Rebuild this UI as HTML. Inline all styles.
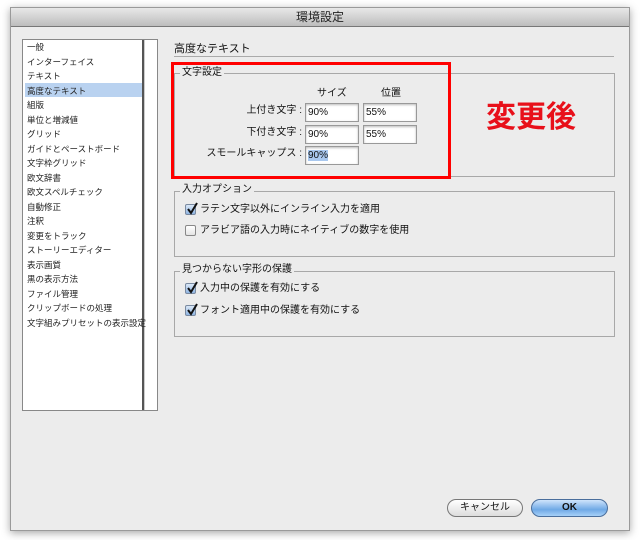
<!DOCTYPE html>
<html><head><meta charset="utf-8"><style>
*{margin:0;padding:0;box-sizing:border-box}
body{width:640px;height:540px;background:#fff;font-family:"Liberation Sans","Noto Sans CJK JP",sans-serif;position:relative;overflow:hidden;color:#111}
.a{position:absolute}
#win{left:10px;top:7px;width:620px;height:524px;background:#ececec;border:1px solid #9a9a9a;box-shadow:0 2px 8px rgba(0,0,0,.35)}
#title{left:0;top:0;width:618px;height:19px;background:linear-gradient(#e8e8e8,#bdbdbd);border-bottom:1px solid #777;text-align:center;font-size:12px;line-height:19px;color:#222}
#list{left:22px;top:39px;width:136px;height:372px;background:#fff;border:1px solid #888}
#list .it{position:absolute;left:4px;font-size:8.5px;line-height:12px;color:#222;white-space:nowrap}
.sel{position:absolute;left:2px;width:117px;height:14px;background:#b9d2f0}
.vb{position:absolute;top:0;width:2px;height:370px;background:#555}
.grp{border:1px solid #a8a8a8}
.lg{position:absolute;font-size:10px;background:#ececec;padding:0 2px;line-height:12px;color:#111}
.lbl{position:absolute;font-size:10px;text-align:right;width:120px;line-height:14px}
.inp{position:absolute;width:54px;height:19px;background:#fff;border:1px solid #999;box-shadow:inset 0 1px 2px #bbb;font-size:10px;line-height:17px;padding-left:2px}
.cb{position:absolute;width:11px;height:11px;border:1px solid #7a8aa0;border-radius:2px;background:linear-gradient(#dbe8f7,#8fb5e3)}
.cb svg{position:absolute;left:0;top:-3px}
.cb.off{background:linear-gradient(#fff,#e4e4e4);border-color:#888}
.ct{position:absolute;font-size:10px;line-height:12px;white-space:nowrap}
</style></head><body>
<div id="win" class="a">
<div id="title" class="a">環境設定</div>
</div>
<div id="list" class="a">
<div class="sel" style="top:43px"></div>
<div class="vb" style="left:119px"></div>
<div style="position:absolute;left:121px;top:0;width:14px;height:370px;border-left:1px solid #ccc;border-right:1px solid #888"></div>
<div class="it" style="top:1px">一般</div>
<div class="it" style="top:15.5px">インターフェイス</div>
<div class="it" style="top:30px">テキスト</div>
<div class="it" style="top:44.5px">高度なテキスト</div>
<div class="it" style="top:59px">組版</div>
<div class="it" style="top:73.5px">単位と増減値</div>
<div class="it" style="top:88px">グリッド</div>
<div class="it" style="top:102.5px">ガイドとペーストボード</div>
<div class="it" style="top:117px">文字枠グリッド</div>
<div class="it" style="top:131.5px">欧文辞書</div>
<div class="it" style="top:146px">欧文スペルチェック</div>
<div class="it" style="top:160.5px">自動修正</div>
<div class="it" style="top:175px">注釈</div>
<div class="it" style="top:189.5px">変更をトラック</div>
<div class="it" style="top:204px">ストーリーエディター</div>
<div class="it" style="top:218.5px">表示画質</div>
<div class="it" style="top:233px">黒の表示方法</div>
<div class="it" style="top:247.5px">ファイル管理</div>
<div class="it" style="top:262px">クリップボードの処理</div>
<div class="it" style="top:276.5px">文字組みプリセットの表示設定</div>
</div>
<div class="a" style="left:174px;top:40px;font-size:11px">高度なテキスト</div>
<div class="a" style="left:174px;top:56px;width:440px;height:1px;background:#aaa"></div>

<div class="a grp" style="left:174px;top:73px;width:441px;height:104px"></div>
<div class="lg" style="left:180px;top:67px">文字設定</div>
<div class="a" style="left:317px;top:84px;font-size:10px">サイズ</div>
<div class="a" style="left:381px;top:84px;font-size:10px">位置</div>
<div class="lbl" style="left:182px;top:104px">上付き文字 :</div>
<div class="lbl" style="left:182px;top:126px">下付き文字 :</div>
<div class="lbl" style="left:182px;top:147px">スモールキャップス :</div>
<div class="inp" style="left:305px;top:103px">90%</div>
<div class="inp" style="left:363px;top:103px">55%</div>
<div class="inp" style="left:305px;top:125px">90%</div>
<div class="inp" style="left:363px;top:125px">55%</div>
<div class="inp" style="left:305px;top:146px"><span style="background:#a9c8ef">90%</span></div>
<div class="a" style="left:171px;top:62px;width:280px;height:117px;border:3px solid #f00"></div>
<div class="a" style="left:486px;top:100px;font-size:30px;font-weight:bold;color:#e8101a;line-height:36px">変更後</div>

<div class="a grp" style="left:174px;top:191px;width:441px;height:66px"></div>
<div class="lg" style="left:180px;top:184px">入力オプション</div>
<div class="cb" style="left:185px;top:204px"><svg width="12" height="13" viewBox="0 0 12 13"><path d="M2 7 L5 11 L11 1" fill="none" stroke="#111" stroke-width="2"/></svg></div><div class="ct" style="left:200px;top:204px">ラテン文字以外にインライン入力を適用</div>
<div class="cb off" style="left:185px;top:225px"></div><div class="ct" style="left:200px;top:225px">アラビア語の入力時にネイティブの数字を使用</div>

<div class="a grp" style="left:174px;top:271px;width:441px;height:66px"></div>
<div class="lg" style="left:180px;top:264px">見つからない字形の保護</div>
<div class="cb" style="left:185px;top:283px"><svg width="12" height="13" viewBox="0 0 12 13"><path d="M2 7 L5 11 L11 1" fill="none" stroke="#111" stroke-width="2"/></svg></div><div class="ct" style="left:200px;top:283px">入力中の保護を有効にする</div>
<div class="cb" style="left:185px;top:305px"><svg width="12" height="13" viewBox="0 0 12 13"><path d="M2 7 L5 11 L11 1" fill="none" stroke="#111" stroke-width="2"/></svg></div><div class="ct" style="left:200px;top:305px">フォント適用中の保護を有効にする</div>

<div class="a" style="left:447px;top:499px;width:76px;height:18px;border:1px solid #777;border-radius:9px;background:linear-gradient(#fff,#ddd);font-size:10px;text-align:center;line-height:16px">キャンセル</div>
<div class="a" style="left:531px;top:499px;width:77px;height:18px;border:1px solid #4a6e9c;border-radius:9px;background:linear-gradient(#cfe4fb,#6fa9e6 60%,#a6d0f8);font-size:10px;font-weight:bold;text-align:center;line-height:16px">OK</div>
</body></html>
